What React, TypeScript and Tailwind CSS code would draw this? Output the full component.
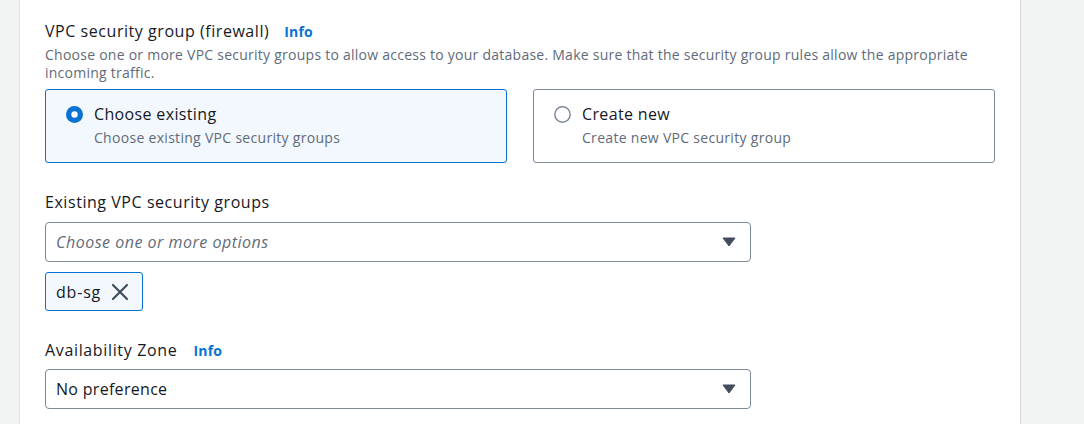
import React from "react";

const font = { fontFamily: "'Open Sans', Roboto, Arial, sans-serif" };

function Caret() {
  return (
    <svg width="14" height="10" viewBox="0 0 14 10" className="shrink-0">
      <path d="M1 1 H13 L7 9 Z" fill="#414d5c" stroke="#414d5c" strokeWidth="1" strokeLinejoin="round" />
    </svg>
  );
}

function Card({ checked, title, sub }: { checked: boolean; title: string; sub: string }) {
  return (
    <div
      className={
        "flex-1 h-[74px] rounded-[3px] border pl-[20px] pt-[13px] " +
        (checked ? "border-[#0972d3] bg-[#f2f8fd]" : "border-[#7d8998] bg-white")
      }
    >
      <div className="flex items-center gap-[11px]">
        {checked ? (
          <svg width="17" height="17" viewBox="0 0 16 16">
            <circle cx="8" cy="8" r="8" fill="#0972d3" />
            <circle cx="8" cy="8" r="3" fill="white" />
          </svg>
        ) : (
          <svg width="17" height="17" viewBox="0 0 16 16">
            <circle cx="8" cy="8" r="7.2" fill="white" stroke="#7d8998" strokeWidth="1.4" />
          </svg>
        )}
        <span className="text-[16px] leading-[22px] text-[#16191f] tracking-[0.35px]">{title}</span>
      </div>
      <div className="pl-[28px] text-[14px] leading-[20px] text-[#5f6b7a] mt-[3px] tracking-[0.3px]">{sub}</div>
    </div>
  );
}

export default function App() {
  return (
    <div className="flex w-[1084px] h-[424px] bg-[#f2f3f3] overflow-hidden" style={font}>
      <div className="w-[20px] shrink-0 bg-[#f2f3f3] border-r border-[#e3e6e8]" />
      <div className="w-[1001px] shrink-0 bg-white border-r border-[#d5dbdb] pl-[25px] pr-[25px] pt-[20px]">
        <div className="flex items-center gap-[15px] h-[22px]">
          <span className="text-[16px] leading-[22px] text-[#16191f] tracking-[0.55px]">VPC security group (firewall)</span>
          <span className="text-[14px] font-bold text-[#0972d3] tracking-[0.2px]">Info</span>
        </div>
        <p className="mt-[4px] text-[14px] leading-[18px] text-[#5f6b7a] w-[949px] tracking-[0.25px]">
          Choose one or more VPC security groups to allow access to your database. Make sure that the security group rules allow the appropriate incoming traffic.
        </p>
        <div className="mt-[7px] flex gap-[26px] w-[950px]">
          <Card checked title="Choose existing" sub="Choose existing VPC security groups" />
          <Card checked={false} title="Create new" sub="Create new VPC security group" />
        </div>
        <div className="mt-[28px] text-[16px] leading-[22px] text-[#16191f] tracking-[0.55px]">Existing VPC security groups</div>
        <div className="mt-[9px] w-[706px] h-[40px] rounded-[4px] border border-[#7d8998] flex items-center justify-between pl-[10px] pr-[14px]">
          <span className="text-[16px] italic text-[#5f6b7a] tracking-[0.5px]">Choose one or more options</span>
          <Caret />
        </div>
        <div className="mt-[10px] w-[98px] h-[39px] rounded-[3px] border border-[#0972d3] bg-[#f2f8fd] flex items-center pl-[10px] gap-[10px]">
          <span className="text-[16px] text-[#16191f] tracking-[0.8px]">db-sg</span>
          <svg width="18" height="18" viewBox="0 0 18 18">
            <path d="M2 2 L16 16 M16 2 L2 16" stroke="#414d5c" strokeWidth="2.2" strokeLinecap="round" />
          </svg>
        </div>
        <div className="mt-[28px] flex items-center gap-[16px] h-[22px]">
          <span className="text-[16px] leading-[22px] text-[#16191f] tracking-[0.65px]">Availability Zone</span>
          <span className="text-[14px] font-bold text-[#0972d3] tracking-[0.2px]">Info</span>
        </div>
        <div className="mt-[8px] w-[706px] h-[40px] rounded-[4px] border border-[#7d8998] flex items-center justify-between pl-[10px] pr-[14px]">
          <span className="text-[16px] text-[#16191f] tracking-[0.3px]">No preference</span>
          <Caret />
        </div>
      </div>
      <div className="flex-1" />
    </div>
  );
}
